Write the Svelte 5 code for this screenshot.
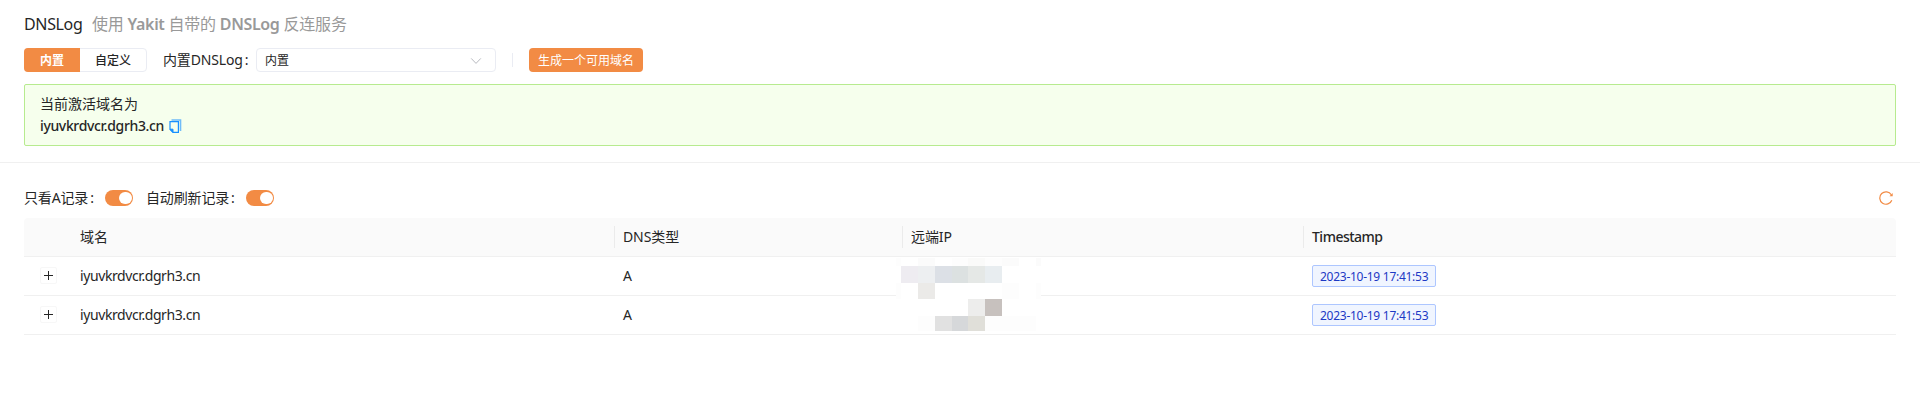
<script>
  const columns = ['', '域名', 'DNS类型', '远端IP', 'Timestamp'];
  const rows = [
    { domain: 'iyuvkrdvcr.dgrh3.cn', type: 'A', time: '2023-10-19 17:41:53' },
    { domain: 'iyuvkrdvcr.dgrh3.cn', type: 'A', time: '2023-10-19 17:41:53' }
  ];
  // Redaction mosaic cells: x, y, width, height, fill
  const cells = [
    [0, 1, 5, 8, '#fdfdfd'], [22, 1, 17, 8, '#fbfbfb'], [56, 1, 16, 8, '#fdfdfd'], [72, 1, 17, 8, '#fafaf9'],
    [89, 1, 17, 8, '#fdfdfd'], [106, 1, 17, 8, '#fbfbfb'], [140, 1, 5, 8, '#fbfbfb'],
    [5, 9, 17, 17, '#eeecf1'], [22, 9, 17, 17, '#edeff1'], [39, 9, 17, 17, '#dce0e6'], [56, 9, 16, 17, '#dce1e1'],
    [72, 9, 17, 17, '#e5e8e6'], [89, 9, 17, 17, '#e8edf0'],
    [0, 26, 5, 16, '#fdfdfd'], [22, 26, 17, 16, '#ebeae8'], [106, 26, 17, 16, '#fdfdfd'], [140, 26, 5, 16, '#fdfdfd'],
    [72, 42, 17, 17, '#ededec'], [89, 42, 17, 17, '#c7c1be'],
    [22, 59, 17, 15, '#fdfdfd'], [39, 59, 17, 15, '#e1e1e1'], [56, 59, 16, 15, '#d6d8da'], [72, 59, 17, 15, '#e0dfd9'],
    [89, 59, 51, 15, '#fdfdfd']
  ];
</script>

<main>
  <section class="top">
    <h1><span class="name">DNSLog</span><span class="sub">使用 <b>Yakit</b> 自带的 <b>DNSLog</b> 反连服务</span></h1>
    <div class="controls">
      <div class="segment"><button class="on">内置</button><button>自定义</button></div>
      <span class="label">内置DNSLog<i>:</i></span>
      <div class="select">
        <span>内置</span>
        <svg width="12" height="12" viewBox="0 0 12 12"><path d="M1.2 3.4 6 8.4l4.8-5" fill="none" stroke="#b8bac0" /></svg>
      </div>
      <span class="bar"></span>
      <button class="primary">生成一个可用域名</button>
    </div>
    <div class="alert">
      <div>当前激活域名为</div>
      <div class="active"><span>iyuvkrdvcr.dgrh3.cn</span>
        <svg width="13" height="14" viewBox="0 0 13 14" fill="none" stroke="#1890ff"><path d="M2.5 1h9v11" stroke-width="1.6" stroke-opacity=".6" /><path d="M1 2.6h8.4v10.8H4L1 10.2z" stroke-width="1.2" /><path d="M1 10.2h3v3.2z" fill="#1890ff" /></svg>
      </div>
    </div>
  </section>
  <section class="records">
    <div class="filters">
      <span class="f1">只看A记录<i>:</i></span><span class="switch"></span>
      <span class="f2">自动刷新记录<i>:</i></span><span class="switch"></span>
      <svg class="reload" width="14" height="14" viewBox="0 0 14 14"><path d="M12.8 9.2A6.2 6.2 0 1 1 12.3 3.8" fill="none" stroke="#f28b44" stroke-width="1.2" /><path d="M13.7 2v3.2h-3.2z" fill="#f28b44" /></svg>
    </div>
    <div class="table">
      <div class="row head">
        {#each columns as c}<div class="cell"><span>{c}</span></div>{/each}
      </div>
      {#each rows as r}
        <div class="row">
          <div class="cell expand"><span class="plus"></span></div>
          <div class="cell domain">{r.domain}</div>
          <div class="cell">{r.type}</div>
          <div class="cell"></div>
          <div class="cell"><span class="tag"><span>{r.time}</span></span></div>
        </div>
      {/each}
      <svg class="mosaic" width="145" height="75" viewBox="0 0 145 75" shape-rendering="crispEdges">
        <rect y="1" width="145" height="73" fill="#fff" />
        {#each cells as [x, y, w, h, fill]}<rect {x} {y} width={w} height={h} {fill} />{/each}
      </svg>
    </div>
  </section>
</main>

<style>
  :global(body) { background: #fff; }
  main { font: 14px/22px "Noto Sans", "Noto Sans CJK SC", sans-serif; color: #262626; height: 416px; overflow: hidden; }
  main * { box-sizing: border-box; white-space: nowrap; }
  i { font-style: normal; margin-left: 2px; }
  .top { height: 163px; padding: 12px 24px 0; border-bottom: 1px solid #f0f0f0; }
  h1 { display: flex; align-items: center; gap: 8px; height: 24px; margin: 0 0 12px; font-size: 16px; font-weight: 400; }
  .name { width: 60px; letter-spacing: -0.35px; }
  .sub { color: #999; letter-spacing: -0.2px; }
  .sub b { font-weight: 600; letter-spacing: -0.35px; }
  .controls { display: flex; align-items: center; height: 24px; margin-bottom: 12px; }
  button { font: 500 12px/22px "Noto Sans", "Noto Sans CJK SC", sans-serif; color: #262626; padding: 0; border: 0; background: none; }
  .segment { display: flex; width: 123px; height: 24px; border: 1px solid #eaecf3; border-radius: 4px; }
  .segment button { width: 66px; height: 22px; padding-top: 1px; }
  .segment .on { width: 56px; height: 24px; margin: -1px 0 0 -1px; padding-top: 2px; background: #f28b44; color: #fff; font-weight: 700; border-radius: 4px 0 0 4px; }
  .label { width: 93px; margin-left: 16px; letter-spacing: -0.15px; }
  .select { display: flex; align-items: center; justify-content: space-between; width: 240px; height: 24px; padding: 1px 13px 0 8px; border: 1px solid #eaecf3; border-radius: 4px; font-size: 12px; }
  .bar { width: 1px; height: 14px; margin: 0 16px; background: #eaecf3; }
  .primary { width: 114px; height: 24px; padding-top: 1px; background: #f28b44; color: #fff; font-weight: 400; border-radius: 4px; }
  .alert { height: 62px; padding: 8px 15px; border: 1px solid #b7eb8f; border-radius: 2px; background: #f6ffed; }
  .active { display: flex; align-items: center; gap: 6px; font-weight: 500; }
  .active span { width: 123px; letter-spacing: -0.36px; }
  .active svg { flex: none; }
  .records { padding: 24px 24px 0; }
  .filters { display: flex; align-items: center; height: 22px; margin-bottom: 9px; }
  .f1 { width: 81px; letter-spacing: -0.15px; }
  .f2 { width: 100px; margin-left: 13px; letter-spacing: -0.15px; }
  .switch { width: 28px; height: 16px; padding: 2px 1px 2px 2px; border-radius: 8px; background: #f28b44; display: flex; justify-content: flex-end; }
  .switch::after { content: ""; width: 13px; height: 12px; border-radius: 6px; background: #fff; }
  .reload { margin-left: auto; margin-right: 3px; }
  .table { position: relative; }
  .row { display: grid; grid-template-columns: 48px 543px 288px 401px 1fr; align-items: center; height: 39px; border-bottom: 1px solid #f0f0f0; }
  .cell { display: flex; align-items: center; height: 22px; padding-left: 8px; }
  .domain { letter-spacing: -0.41px; }
  .head { background: #fafafa; border-radius: 4px 4px 0 0; }
  .head .cell { border-right: 1px solid #ebebeb; letter-spacing: -0.1px; }
  .head .cell:first-child, .head .cell:last-child { border-right: 0; }
  .head .cell:last-child { font-weight: 500; letter-spacing: -0.5px; }
  .expand { padding-left: 16px; }
  .plus { width: 17px; height: 17px; margin-bottom: 1px; border: 1px solid #f7f7f7; border-radius: 2px; background: linear-gradient(#262626, #262626) center / 9px 1px no-repeat, linear-gradient(#262626, #262626) center / 1px 9px no-repeat; }
  .tag { display: inline-flex; align-items: center; width: 124px; height: 22px; padding: 1px 0 0 7px; border: 1px solid #adc6ff; border-radius: 2px; background: #f0f5ff; color: #1d39c4; font-size: 12px; letter-spacing: -0.27px; }
  .mosaic { position: absolute; left: 872px; top: 39px; }
</style>
